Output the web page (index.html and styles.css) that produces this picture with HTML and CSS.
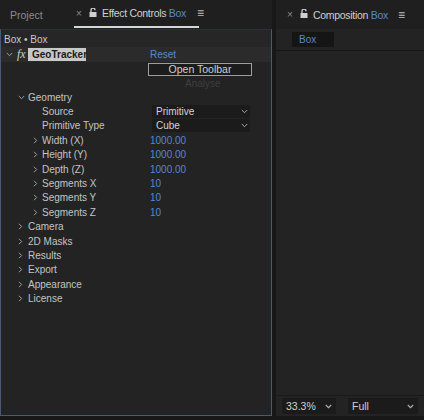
FILE: index.html
```html
<!DOCTYPE html>
<html>
<head>
<meta charset="utf-8">
<link rel="stylesheet" href="styles.css">
</head>
<body>
<div class="app">
  <section class="left">
    <div class="tabs">
      <span class="tab tab-project">Project</span>
      <span class="tab tab-active">
        <span class="close">×</span>
        <svg class="lock" width="8" height="9" viewBox="0 0 8 9"><rect x="0.5" y="4" width="7" height="5" fill="#cfcfcf"/><path d="M2 4V2.2a2 2 0 0 1 4 0" fill="none" stroke="#cfcfcf" stroke-width="1.3"/></svg>
        <span class="tab-title">Effect Controls <span class="blue">Box</span></span>
        <span class="menu">≡</span>
      </span>
    </div>
    <div class="panel">
      <div class="crumb">Box • Box</div>
      <div class="fx-row">
        <svg class="chev-d" width="7" height="5" viewBox="0 0 7 5"><path d="M0.8 1l2.7 2.7L6.2 1" fill="none" stroke="#a0a0a0" stroke-width="1"/></svg>
        <span class="fx">fx</span>
        <span class="fx-name">GeoTracker</span>
        <span class="reset blue">Reset</span>
      </div>
      <div class="btn-row"><span class="btn">Open Toolbar</span></div>
      <div class="analyse-row"><span class="analyse">Analyse</span></div>
      <div class="row l1"><span class="chev"><svg width="7" height="5" viewBox="0 0 7 5"><path d="M0.8 1l2.7 2.7L6.2 1" fill="none" stroke="#a0a0a0" stroke-width="1"/></svg></span><span class="label">Geometry</span></div>
      <div class="row l2"><span class="chev"></span><span class="label">Source</span><span class="select">Primitive<svg class="caret" width="7" height="5" viewBox="0 0 7 5"><path d="M0.8 1l2.7 2.7L6.2 1" fill="none" stroke="#a8a8a8" stroke-width="1"/></svg></span></div>
      <div class="row l2"><span class="chev"></span><span class="label">Primitive Type</span><span class="select">Cube<svg class="caret" width="7" height="5" viewBox="0 0 7 5"><path d="M0.8 1l2.7 2.7L6.2 1" fill="none" stroke="#a8a8a8" stroke-width="1"/></svg></span></div>
      <div class="row l2"><span class="chev"><svg width="5" height="7" viewBox="0 0 5 7"><path d="M1 0.8l2.7 2.7L1 6.2" fill="none" stroke="#a0a0a0" stroke-width="1"/></svg></span><span class="label">Width (X)</span><span class="val">1000.00</span></div>
      <div class="row l2"><span class="chev"><svg width="5" height="7" viewBox="0 0 5 7"><path d="M1 0.8l2.7 2.7L1 6.2" fill="none" stroke="#a0a0a0" stroke-width="1"/></svg></span><span class="label">Height (Y)</span><span class="val">1000.00</span></div>
      <div class="row l2"><span class="chev"><svg width="5" height="7" viewBox="0 0 5 7"><path d="M1 0.8l2.7 2.7L1 6.2" fill="none" stroke="#a0a0a0" stroke-width="1"/></svg></span><span class="label">Depth (Z)</span><span class="val">1000.00</span></div>
      <div class="row l2"><span class="chev"><svg width="5" height="7" viewBox="0 0 5 7"><path d="M1 0.8l2.7 2.7L1 6.2" fill="none" stroke="#a0a0a0" stroke-width="1"/></svg></span><span class="label">Segments X</span><span class="val">10</span></div>
      <div class="row l2"><span class="chev"><svg width="5" height="7" viewBox="0 0 5 7"><path d="M1 0.8l2.7 2.7L1 6.2" fill="none" stroke="#a0a0a0" stroke-width="1"/></svg></span><span class="label">Segments Y</span><span class="val">10</span></div>
      <div class="row l2"><span class="chev"><svg width="5" height="7" viewBox="0 0 5 7"><path d="M1 0.8l2.7 2.7L1 6.2" fill="none" stroke="#a0a0a0" stroke-width="1"/></svg></span><span class="label">Segments Z</span><span class="val">10</span></div>
      <div class="row l1"><span class="chev"><svg width="5" height="7" viewBox="0 0 5 7"><path d="M1 0.8l2.7 2.7L1 6.2" fill="none" stroke="#a0a0a0" stroke-width="1"/></svg></span><span class="label">Camera</span></div>
      <div class="row l1"><span class="chev"><svg width="5" height="7" viewBox="0 0 5 7"><path d="M1 0.8l2.7 2.7L1 6.2" fill="none" stroke="#a0a0a0" stroke-width="1"/></svg></span><span class="label">2D Masks</span></div>
      <div class="row l1"><span class="chev"><svg width="5" height="7" viewBox="0 0 5 7"><path d="M1 0.8l2.7 2.7L1 6.2" fill="none" stroke="#a0a0a0" stroke-width="1"/></svg></span><span class="label">Results</span></div>
      <div class="row l1"><span class="chev"><svg width="5" height="7" viewBox="0 0 5 7"><path d="M1 0.8l2.7 2.7L1 6.2" fill="none" stroke="#a0a0a0" stroke-width="1"/></svg></span><span class="label">Export</span></div>
      <div class="row l1"><span class="chev"><svg width="5" height="7" viewBox="0 0 5 7"><path d="M1 0.8l2.7 2.7L1 6.2" fill="none" stroke="#a0a0a0" stroke-width="1"/></svg></span><span class="label">Appearance</span></div>
      <div class="row l1"><span class="chev"><svg width="5" height="7" viewBox="0 0 5 7"><path d="M1 0.8l2.7 2.7L1 6.2" fill="none" stroke="#a0a0a0" stroke-width="1"/></svg></span><span class="label">License</span></div>
    </div>
  </section>
  <section class="right">
    <div class="tabs">
      <span class="tab tab-comp">
        <span class="close">×</span>
        <svg class="lock" width="8" height="9" viewBox="0 0 8 9"><rect x="0.5" y="4" width="7" height="5" fill="#cfcfcf"/><path d="M2 4V2.2a2 2 0 0 1 4 0" fill="none" stroke="#cfcfcf" stroke-width="1.3"/></svg>
        <span class="tab-title">Composition <span class="blue">Box</span></span>
        <span class="menu">≡</span>
      </span>
    </div>
    <div class="comp">
      <div class="comp-head"><span class="comp-tab">Box</span></div>
      <div class="viewer"></div>
      <div class="comp-foot">
        <span class="dd dd-zoom">33.3%<svg class="caret" width="7" height="5" viewBox="0 0 7 5"><path d="M0.8 1l2.7 2.7L6.2 1" fill="none" stroke="#b0b0b0" stroke-width="1.1"/></svg></span>
        <span class="dd dd-res">Full<svg class="caret" width="7" height="5" viewBox="0 0 7 5"><path d="M0.8 1l2.7 2.7L6.2 1" fill="none" stroke="#b0b0b0" stroke-width="1.1"/></svg></span>
      </div>
    </div>
  </section>
</div>
</body>
</html>
```

FILE: styles.css
```css
* { box-sizing: border-box; }
html, body { margin: 0; padding: 0; }
body {
  width: 424px;
  height: 420px;
  background: #181818;
  font-family: "Liberation Sans", Arial, sans-serif;
  font-size: 10px;
  color: #c2c2c2;
  overflow: hidden;
}
.app {
  display: flex;
  height: 420px;
  gap: 4px;
}
.blue { color: #5b88c8; }
.left {
  width: 272px;
  display: flex;
  flex-direction: column;
}
.right {
  flex: 1;
  display: flex;
  flex-direction: column;
}
.tabs {
  height: 29px;
  background: #1f1f1f;
  display: flex;
  align-items: stretch;
}
.tab {
  display: flex;
  align-items: center;
  font-size: 10.5px;
  color: #d0d0d0;
}
.tab svg, .tab span { flex-shrink: 0; }
.tab-project {
  padding-left: 10px;
  width: 74px;
  color: #8c8c8c;
}
.tab-active {
  width: 125px;
  border-bottom: 2px solid #d6d6d6;
  margin-bottom: 1px;
}
.close {
  font-size: 10px;
  color: #8a8a8a;
  margin-left: 2px;
  width: 13px;
}
.lock { margin-right: 5px; margin-top: -2px; }
.tab-title { white-space: nowrap; letter-spacing: -0.3px; }
.menu {
  margin-left: 11px;
  font-size: 12px;
  color: #bdbdbd;
}
.tab-comp { padding-left: 9px; }
.tab-comp .menu { margin-left: 10px; }

.panel {
  flex: 1;
  background: #232323;
  border: 1.5px solid #4b5a73;
  border-top: 1px solid #2c3038;
  margin-bottom: 4px;
  display: flex;
  flex-direction: column;
}
.crumb {
  height: 17px;
  line-height: 19px;
  padding-left: 3px;
  background: #262626;
  color: #c8c8c8;
}
.fx-row {
  height: 15px;
  display: flex;
  align-items: center;
  background: #2b2b2b;
}
.chev-d { margin-left: 5px; margin-right: 4px; }
.fx {
  font-family: "Liberation Serif", serif;
  font-style: italic;
  font-size: 12px;
  color: #cfcfcf;
  width: 11px;
}
.fx-name {
  background: #c8c8c8;
  color: #1b1b1b;
  font-weight: bold;
  padding: 0 4px;
  height: 13px;
  line-height: 13px;
  width: 58px;
}
.reset { margin-left: 64px; }
.btn-row {
  height: 14px;
  display: flex;
  align-items: center;
  padding-left: 147px;
}
.btn {
  width: 104px;
  height: 13px;
  border: 1px solid #9e9e9e;
  background: #1c1c1c;
  text-align: center;
  line-height: 11px;
  color: #cfcfcf;
  font-size: 10.5px;
}
.analyse-row {
  height: 14px;
  line-height: 15px;
  padding-left: 184px;
}
.analyse { color: #3e3e3e; }
.row {
  height: 14.4px;
  display: flex;
  align-items: center;
  white-space: nowrap;
}
.chev {
  display: flex;
  align-items: center;
  flex-shrink: 0;
}
.l1 { padding-left: 17px; }
.l1 .chev { width: 10px; }
.l2 { padding-left: 32px; }
.l2 .chev { width: 9px; }
.l1 .label { width: 122px; }
.l2 .label { width: 108px; }
.row .label { color: #c4c4c4; }
.val { color: #5487d2; }
.select {
  margin-left: 2px;
  width: 98px;
  height: 13px;
  background: #1b1b1b;
  display: flex;
  align-items: center;
  justify-content: space-between;
  padding: 0 2px 0 4px;
  color: #d2d2d2;
}

.comp {
  flex: 1;
  background: #232323;
  display: flex;
  flex-direction: column;
  margin-bottom: 4px;
}
.comp-head {
  height: 22px;
  border-bottom: 1px solid #161616;
  padding: 3px 0 0 16px;
}
.comp-tab {
  display: inline-block;
  width: 42px;
  height: 15px;
  line-height: 15px;
  background: #151515;
  color: #5b88c8;
  padding-left: 7px;
  font-size: 10px;
}
.viewer { flex: 1; }
.comp-foot {
  height: 21px;
  border-top: 1px solid #1a1a1a;
  display: flex;
  align-items: center;
  padding-left: 6px;
  gap: 12px;
}
.dd {
  height: 16px;
  background: #1b1b1b;
  display: flex;
  align-items: center;
  justify-content: space-between;
  padding: 0 4px;
  color: #d0d0d0;
  font-size: 10.5px;
}
.dd-zoom { width: 54px; }
.dd-res { width: 70px; }
```
